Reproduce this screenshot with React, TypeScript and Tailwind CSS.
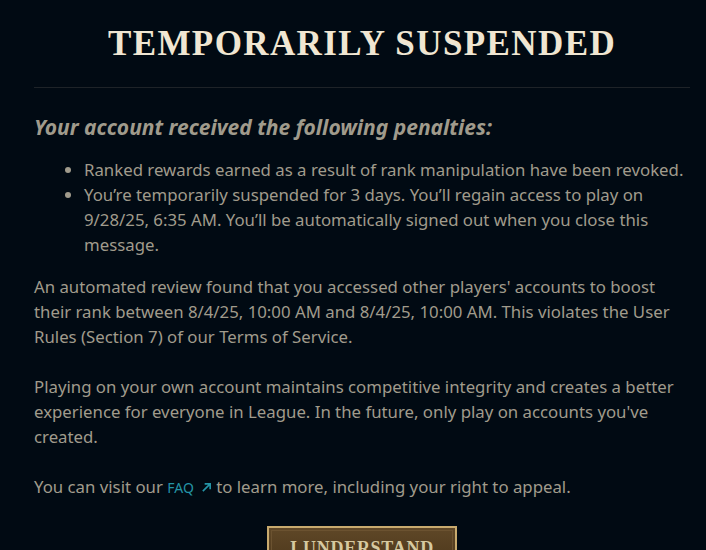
export default function App() {
  return (
    <div className="h-[550px] w-[706px] overflow-hidden bg-[#010a13] text-[#a09b8c] [font-family:'Noto_Sans',sans-serif]">
      <div className="ml-[34px] mr-[16px] border-b border-[#1e2328] pt-[21px] pb-[20px] text-center">
        <h1 className="text-[35px] leading-[46px] font-bold tracking-[0.04em] text-[#f0e6d2] [font-family:'Liberation_Serif',serif]">
          TEMPORARILY SUSPENDED
        </h1>
      </div>

      <div className="pl-[34px] pr-[16px] pt-[25px]">
        <h2 className="text-[21px] leading-[28px] font-bold italic text-[#a09b8c]">
          Your account received the following penalties:
        </h2>

        <ul className="mt-[16px] list-disc pl-[50px] text-[16.8px] leading-[25px] marker:text-[#a09b8c]">
          <li>Ranked rewards earned as a result of rank manipulation have been revoked.</li>
          <li>
            You’re temporarily suspended for 3 days. You’ll regain access to play on 9/28/25, 6:35 AM.
            You’ll be automatically signed out when you close this message.
          </li>
        </ul>

        <div className="mt-[17px] flex flex-col gap-[25px] text-[16.8px] leading-[25px]">
          <p>
            An automated review found that you accessed other players' accounts to boost their rank
            between 8/4/25, 10:00 AM and 8/4/25, 10:00 AM. This violates the User Rules (Section 7) of
            our Terms of Service.
          </p>
          <p>
            Playing on your own account maintains competitive integrity and creates a better experience
            for everyone in League. In the future, only play on accounts you've created.
          </p>
          <p>
            You can visit our{" "}
            <a className="inline-flex items-center gap-[7px] text-[14px] text-[#2494a6]">
              FAQ
              <svg width="11" height="11" viewBox="0 0 12 12" fill="none" stroke="currentColor" strokeWidth="1.8">
                <path d="M2 10 L10 2 M4 2 H10 V8" />
              </svg>
            </a>{" "}
            to learn more, including your right to appeal.
          </p>
        </div>

        <div className="mt-[26px] flex justify-center">
          <button className="w-[190px] border-2 border-[#c8aa6e] bg-gradient-to-b from-[#5f4727] to-[#4a3519] p-[2px]">
            <div className="border border-[#6b5230] pt-[6px] pb-[8px] text-[18px] leading-[22px] font-bold tracking-[0.04em] text-[#d6c9a0] [font-family:'Liberation_Serif',serif]">
              I UNDERSTAND
            </div>
          </button>
        </div>
      </div>
    </div>
  );
}
